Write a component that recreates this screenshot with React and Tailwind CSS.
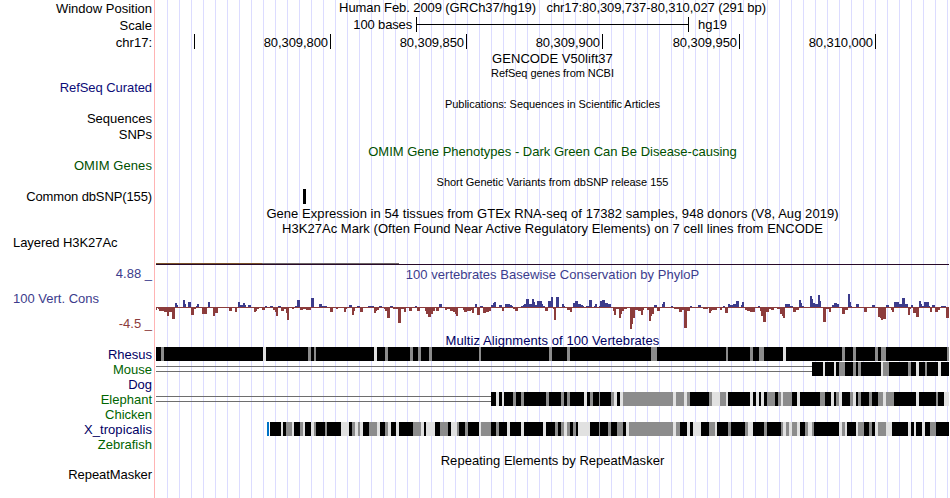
const labels = [
    { text: "Window Position", className: "mt-[1px]" },
    { text: "Scale", className: "mt-[2px]" },
    { text: "chr17:", className: "mt-[2px]" },
    { text: "RefSeq Curated", className: "mt-[30px] tracking-[-0.07px] text-[#0c0c78]" },
    { text: "Sequences", className: "mt-4" },
    { text: "SNPs", className: "mt-[1px]" },
    { text: "OMIM Genes", className: "mt-4 tracking-[0.08px] text-[#005000]" },
    { text: "Common dbSNP(155)", className: "mt-4 tracking-[-0.12px]" },
    { text: "Layered H3K27Ac", className: "mt-[31px] self-start ml-[13px] tracking-[-0.07px]" },
    { text: "4.88 _", className: "mt-4 text-[#3c3c8c]" },
    { text: "100 Vert. Cons", className: "mt-[10px] self-start ml-[13px] text-[#3c3c8c]" },
    { text: "-4.5 _", className: "mt-[10px] text-[#8c3c3c]" },
    { text: "Rhesus", className: "mt-4 text-[#000064]" },
    { text: "Mouse", className: "text-[#006400]" },
    { text: "Dog", className: "text-[#000064]" },
    { text: "Elephant", className: "text-[#006400]" },
    { text: "Chicken", className: "text-[#006400]" },
    { text: "X_tropicalis", className: "tracking-[0.07px] text-[#000064]" },
    { text: "Zebrafish", className: "text-[#006400]" },
    { text: "RepeatMasker", className: "mt-[15px] tracking-[-0.07px]" },
];

const ticks = [
    { x: 194 },
    { x: 330, label: "80,309,800" },
    { x: 466, label: "80,309,850" },
    { x: 602, label: "80,309,900" },
    { x: 739, label: "80,309,950" },
    { x: 875, label: "80,310,000" },
];

// start, end (in thirds of a pixel from origin), height; negative goes below the baseline
const scores = [
    {
        origin: 150,
        bars: [
            [18, 21, -3], [24, 27, -2], [27, 42, -4], [42, 51, -5], [51, 57, -9], [57, 66, -5], [66, 75, -12],
            [75, 81, 4], [81, 84, 2], [99, 105, 7], [105, 108, 3], [114, 123, 5], [123, 132, -8], [132, 138, -2],
            [138, 141, 1], [141, 147, 3], [156, 171, -7], [174, 180, 5], [189, 195, -9], [195, 204, -6],
            [237, 246, -4], [255, 261, -5], [264, 270, 5], [270, 279, 2], [279, 285, 4], [285, 288, 2],
            [294, 303, 2], [312, 318, -5], [318, 321, -4], [321, 327, -2], [336, 345, -3], [345, 351, 1],
            [360, 369, 1], [369, 375, -3], [375, 378, -5], [378, 384, -9], [384, 393, 1], [393, 402, -4],
            [402, 408, -2], [408, 411, -6], [411, 417, -13], [426, 432, -2], [435, 441, 1], [441, 450, 7],
            [450, 459, -3], [459, 468, -2], [468, 483, -3], [483, 492, 9], [507, 516, 3], [516, 531, 1],
            [540, 549, -5], [558, 564, -2], [582, 588, -5], [588, 591, -2], [597, 606, 2], [606, 612, -8],
            [612, 615, -4],
        ],
    },
    {
        origin: 350,
        bars: [
            [0, 6, 2], [6, 12, -8], [12, 15, -4], [21, 30, 1], [30, 39, -5], [54, 72, 1], [72, 78, -6],
            [78, 81, -4], [81, 87, -3], [87, 96, 1], [102, 105, -2], [105, 111, -4], [111, 120, -11],
            [120, 129, 1], [129, 144, -2], [144, 153, -16], [153, 162, -2], [162, 168, -5], [177, 186, -4],
            [195, 201, 1], [201, 210, -4], [225, 228, -4], [228, 234, -7], [234, 243, -10], [243, 249, -7],
            [249, 255, -4], [258, 267, -4], [267, 276, 3], [285, 291, -3], [291, 300, -2], [300, 309, -4],
            [309, 315, -5], [315, 318, -7], [318, 324, -9], [339, 342, -3], [342, 351, -5], [351, 363, -4],
            [363, 366, -3], [366, 372, -6], [375, 381, 3], [381, 390, -8], [390, 399, 1], [399, 408, -6],
            [408, 417, -5], [417, 423, -4], [423, 429, 2], [429, 432, 4], [432, 438, 5], [447, 456, 2],
            [456, 462, -4], [465, 480, 3], [480, 486, 2], [486, 489, 1], [489, 495, -2], [495, 504, -4],
            [513, 519, 1], [519, 522, 2], [522, 528, 3], [528, 537, 8], [537, 546, 3], [546, 552, 8],
            [552, 555, 5], [555, 561, 2], [561, 576, 6], [576, 579, 3], [579, 585, 1], [585, 594, -4],
            [594, 603, 6],
        ],
    },
    {
        origin: 550,
        bars: [
            [3, 9, 10], [9, 12, -2], [12, 18, -13], [18, 27, 10], [36, 42, 3], [42, 45, 1], [51, 60, -3],
            [60, 66, -5], [69, 75, 4], [75, 84, 6], [84, 93, 3], [93, 99, 2], [99, 102, 1], [108, 117, 1],
            [117, 126, 7], [132, 135, 1], [135, 141, 3], [147, 150, 1], [150, 156, 6], [156, 165, 7],
            [165, 174, 4], [174, 183, 3], [189, 192, -4], [192, 198, -8], [198, 207, -2], [207, 213, -11],
            [213, 216, -7], [216, 222, -4], [222, 231, -2], [240, 246, -22], [246, 249, -17], [249, 255, -11],
            [255, 264, -3], [264, 273, -4], [273, 279, -8], [279, 282, -3], [291, 297, -3], [297, 303, -14],
            [303, 306, -9], [306, 312, -7], [312, 321, 2], [321, 330, -4], [336, 339, 3], [339, 345, 5],
            [363, 369, 1], [372, 387, -2], [387, 396, -5], [396, 402, -3], [402, 411, -21], [411, 420, -4],
            [420, 426, 1], [444, 453, 2], [459, 474, -2], [477, 483, -6], [483, 486, -4], [486, 501, -3],
            [510, 516, -3], [519, 525, 1], [525, 534, -6], [534, 540, 3], [540, 549, 2], [549, 558, 3],
            [558, 567, 6], [573, 576, 2], [576, 582, 5],
        ],
    },
    {
        origin: 745,
        bars: [
            [0, 6, -3], [6, 15, -4], [15, 30, -5], [39, 45, 1], [45, 48, -4], [48, 54, -9], [54, 63, -15],
            [63, 72, -5], [72, 78, -2], [78, 87, -3], [96, 105, -2], [105, 111, -7], [111, 114, -9],
            [114, 120, -11], [120, 135, 3], [135, 144, 1], [144, 153, -5], [153, 162, -3], [162, 168, 7],
            [168, 171, 4], [171, 177, 1], [195, 201, 11], [201, 204, 8], [204, 210, 4], [210, 219, 3],
            [219, 225, 12], [225, 228, 6], [234, 243, -15], [243, 252, -2], [252, 258, -5], [261, 267, 2],
            [267, 276, 4], [276, 282, 3], [282, 291, -1], [291, 300, -7], [300, 309, -3], [309, 315, 13],
            [315, 318, 5], [318, 321, 1], [333, 342, 3], [357, 366, -5], [381, 390, 2], [399, 405, -10],
            [405, 408, -11], [408, 414, -13], [414, 423, -12], [423, 432, 2], [438, 441, -3], [441, 447, -5],
            [447, 462, 5], [462, 471, 3], [471, 480, 9], [480, 489, 3], [489, 495, -8], [495, 498, -2],
            [498, 504, 2], [504, 513, -6], [513, 522, -10], [522, 528, 6], [528, 531, 3], [531, 537, 1],
            [537, 552, 5], [552, 555, 1], [555, 561, -5], [561, 570, 2], [570, 579, -5], [579, 585, -3],
            [588, 603, 1], [603, 612, -11],
        ],
    },
];

// g = weak match, l = very weak match; pairs of start/end in thirds of a pixel
const alignments = [
    {
        name: "Rhesus",
        y: 0,
        start: 156,
        parts: [
            {
                origin: 150,
                g: [[33, 42], [474, 483], [492, 498], [705, 714], [780, 789], [804, 810]],
                l: [[339, 348], [672, 681]],
            },
            { origin: 410, g: [[0, 9], [24, 33], [57, 66], [207, 213], [417, 426], [471, 480], [723, 741]], l: [] },
            {
                origin: 680,
                g: [[138, 144], [210, 219], [237, 252], [486, 495], [519, 528], [585, 594], [603, 618], [801, 807]],
                l: [[309, 318]],
            },
        ],
    },
    {
        name: "Mouse",
        y: 15,
        start: 812,
        parts: [
            {
                origin: 680,
                g: [[477, 495], [519, 528], [534, 543], [609, 627], [684, 693], [735, 741]],
                l: [[429, 435], [462, 468], [603, 609], [708, 717], [774, 783]],
            },
        ],
    },
    {
        name: "Elephant",
        y: 45,
        start: 491,
        parts: [
            {
                origin: 410,
                g: [
                    [309, 318], [333, 342], [408, 417], [453, 462], [471, 480], [540, 549], [567, 570],
                    [603, 612], [639, 789], [798, 810],
                ],
                l: [[258, 267], [276, 282], [522, 531], [612, 621], [630, 639], [789, 798]],
            },
            {
                origin: 680,
                g: [
                    [0, 12], [21, 30], [87, 96], [120, 138], [261, 285], [294, 303], [309, 336], [420, 435],
                    [468, 477], [510, 519], [534, 543], [567, 576], [594, 609], [618, 642], [768, 774],
                ],
                l: [
                    [12, 21], [96, 120], [138, 144], [210, 219], [228, 237], [243, 252], [303, 309],
                    [351, 360], [453, 462], [477, 486], [519, 528], [609, 618], [708, 717], [792, 807],
                ],
            },
        ],
    },
    {
        name: "X_tropicalis",
        y: 75,
        start: 270,
        parts: [
            {
                origin: 150,
                g: [
                    [408, 426], [450, 459], [492, 498], [525, 531], [606, 615], [624, 630], [657, 681],
                    [705, 714], [789, 810],
                ],
                l: [
                    [393, 399], [426, 432], [459, 465], [483, 492], [573, 597], [615, 624], [630, 639],
                    [681, 690], [714, 723], [738, 747],
                ],
            },
            {
                origin: 410,
                g: [
                    [9, 33], [90, 114], [141, 147], [165, 174], [213, 243], [258, 267], [435, 444], [453, 462],
                    [471, 480], [489, 498], [567, 570], [594, 603], [621, 639], [657, 789], [798, 810],
                ],
                l: [
                    [33, 42], [48, 75], [123, 141], [207, 213], [291, 300], [333, 342], [399, 408],
                    [462, 471], [504, 540], [648, 657], [789, 798],
                ],
            },
            {
                origin: 680,
                g: [
                    [87, 105], [144, 153], [195, 204], [252, 261], [303, 309], [318, 327], [336, 351],
                    [375, 384], [396, 402], [486, 495], [534, 552], [567, 576], [594, 618], [750, 768],
                ],
                l: [
                    [21, 30], [39, 63], [105, 111], [204, 219], [309, 318], [327, 336], [351, 360],
                    [384, 396], [477, 486], [495, 501], [528, 534], [585, 594], [618, 636], [684, 693],
                    [702, 708], [726, 735],
                ],
            },
        ],
    },
];

function blocks(origin, pairs, y) {
    return pairs.map(([a, b]) => `M${origin + a / 3} ${y}h${(b - a) / 3}v14h${(a - b) / 3}z`).join("");
}

function bars(sign) {
    return scores
        .flatMap(({ origin, bars }) =>
            bars
                .filter(([, , h]) => h * sign > 0)
                .map(([a, b, h]) => `M${origin + a / 3} 25h${(b - a) / 3}v${-h}h${(a - b) / 3}z`)
        )
        .join("");
}

function Title({ children, className = "" }) {
    return (
        <div className={`h-[15px] w-[793px] shrink-0 whitespace-pre text-center leading-[15px] ${className}`}>
            {children}
        </div>
    );
}

function Ruler() {
    return (
        <svg viewBox="156 16 794 35" className="h-[35px] w-[794px] shrink-0" shapeRendering="crispEdges">
            <path d="M416 17h1v15h-1zM688 17h1v15h-1zM416 24h272v1h-272z" />
            <text x="412" y="29" textAnchor="end" className="tracking-[-0.15px]">100 bases</text>
            <text x="698" y="29">hg19</text>
            {ticks.map(({ x, label }) => (
                <g key={x}>
                    <rect x={x} y="34" width="1" height="15" />
                    {label && (
                        <text x={x - 2} y="47" textAnchor="end" className="tracking-[-0.07px]">
                            {label}
                        </text>
                    )}
                </g>
            ))}
        </svg>
    );
}

function Conservation() {
    return (
        <svg viewBox="156 282 794 50" className="h-[50px] w-[794px] shrink-0" shapeRendering="crispEdges">
            <g transform="translate(0 282)">
                <rect x="156" y="25" width="793" height="1" fill="#8c3c3c" />
                <path d={bars(1)} fill="#3c3c8c" />
                <path d={bars(-1)} fill="#8c3c3c" />
            </g>
        </svg>
    );
}

function Multiz() {
    return (
        <svg viewBox="156 0 794 106" className="h-[106px] w-[794px] shrink-0" shapeRendering="crispEdges">
            <path d="M156 19h656v1h-656zM156 24h656v1h-656zM156 49h335v1h-335zM156 54h335v1h-335z" fill="#6e6e6e" />
            {alignments.map(({ name, y, start, parts }) => (
                <g key={name}>
                    <rect x={start} y={y} width={949 - start} height="14" />
                    {parts.map(({ origin, g, l }) => (
                        <g key={origin}>
                            <path d={blocks(origin, g, y)} fill="#8c8c8c" />
                            <path d={blocks(origin, l, y)} fill="#e1e1e1" />
                        </g>
                    ))}
                </g>
            ))}
            <rect x="267" y="75" width="2" height="14" fill="#0072c6" />
            <rect x="269" y="75" width="1" height="14" fill="#fff" />
        </svg>
    );
}

export default function App() {
    return (
        <div className="flex h-[498px] w-[950px] overflow-hidden bg-white font-['Liberation_Sans',Arial,sans-serif] text-[13px] text-black">
            <div className="flex w-[154px] shrink-0 flex-col items-end pr-[2px]">
                {labels.map(({ text, className }) => (
                    <div key={text} className={`h-[15px] shrink-0 whitespace-nowrap leading-[15px] ${className}`}>
                        {text}
                    </div>
                ))}
            </div>
            <div className="mr-[1px] w-[1px] shrink-0 bg-[#ffb4b4]" />

            <div className="flex w-[794px] shrink-0 flex-col bg-[linear-gradient(90deg,#dcdcff_1px,transparent_1px)] bg-[length:12px_100%] bg-[position:11px_0]">
                <Title className="mb-[1px] tracking-[-0.09px]">
                    {"Human Feb. 2009 (GRCh37/hg19)   chr17:80,309,737-80,310,027 (291 bp)"}
                </Title>
                <Ruler />
                <Title className="tracking-[0.05px]">GENCODE V50lift37</Title>
                <Title className="mb-4 text-[11px] tracking-[-0.06px]">RefSeq genes from NCBI</Title>
                <Title className="mb-8 text-[11px] tracking-[-0.06px]">
                    Publications: Sequences in Scientific Articles
                </Title>
                <Title className="mb-4 text-[#005000]">OMIM Gene Phenotypes - Dark Green Can Be Disease-causing</Title>
                <Title className="mb-[-1px] text-[11px] tracking-[-0.03px]">
                    Short Genetic Variants from dbSNP release 155
                </Title>
                <div className="mb-[2px] ml-[147px] h-[15px] w-[3px] shrink-0 bg-black" />
                <Title className="tracking-[0.055px]">
                    Gene Expression in 54 tissues from GTEx RNA-seq of 17382 samples, 948 donors (V8, Aug 2019)
                </Title>
                <Title className="tracking-[0.04px]">
                    H3K27Ac Mark (Often Found Near Active Regulatory Elements) on 7 cell lines from ENCODE
                </Title>
                <div className="mb-[2px] mt-[27px] flex h-[2px] w-[793px] shrink-0 border-b border-[#280a28]">
                    <div className="w-[106px] bg-[#785028]" />
                    <div className="w-[137px] bg-[#6e6464]" />
                </div>
                <Title className="tracking-[0.03px] text-[#3c3c8c]">100 vertebrates Basewise Conservation by PhyloP</Title>
                <Conservation />
                <Title className="mb-[-1px] mt-[1px] tracking-[0.08px] text-[#000064]">
                    Multiz Alignments of 100 Vertebrates
                </Title>
                <Multiz />
                <Title className="tracking-[0.03px]">Repeating Elements by RepeatMasker</Title>
            </div>
        </div>
    );
}
